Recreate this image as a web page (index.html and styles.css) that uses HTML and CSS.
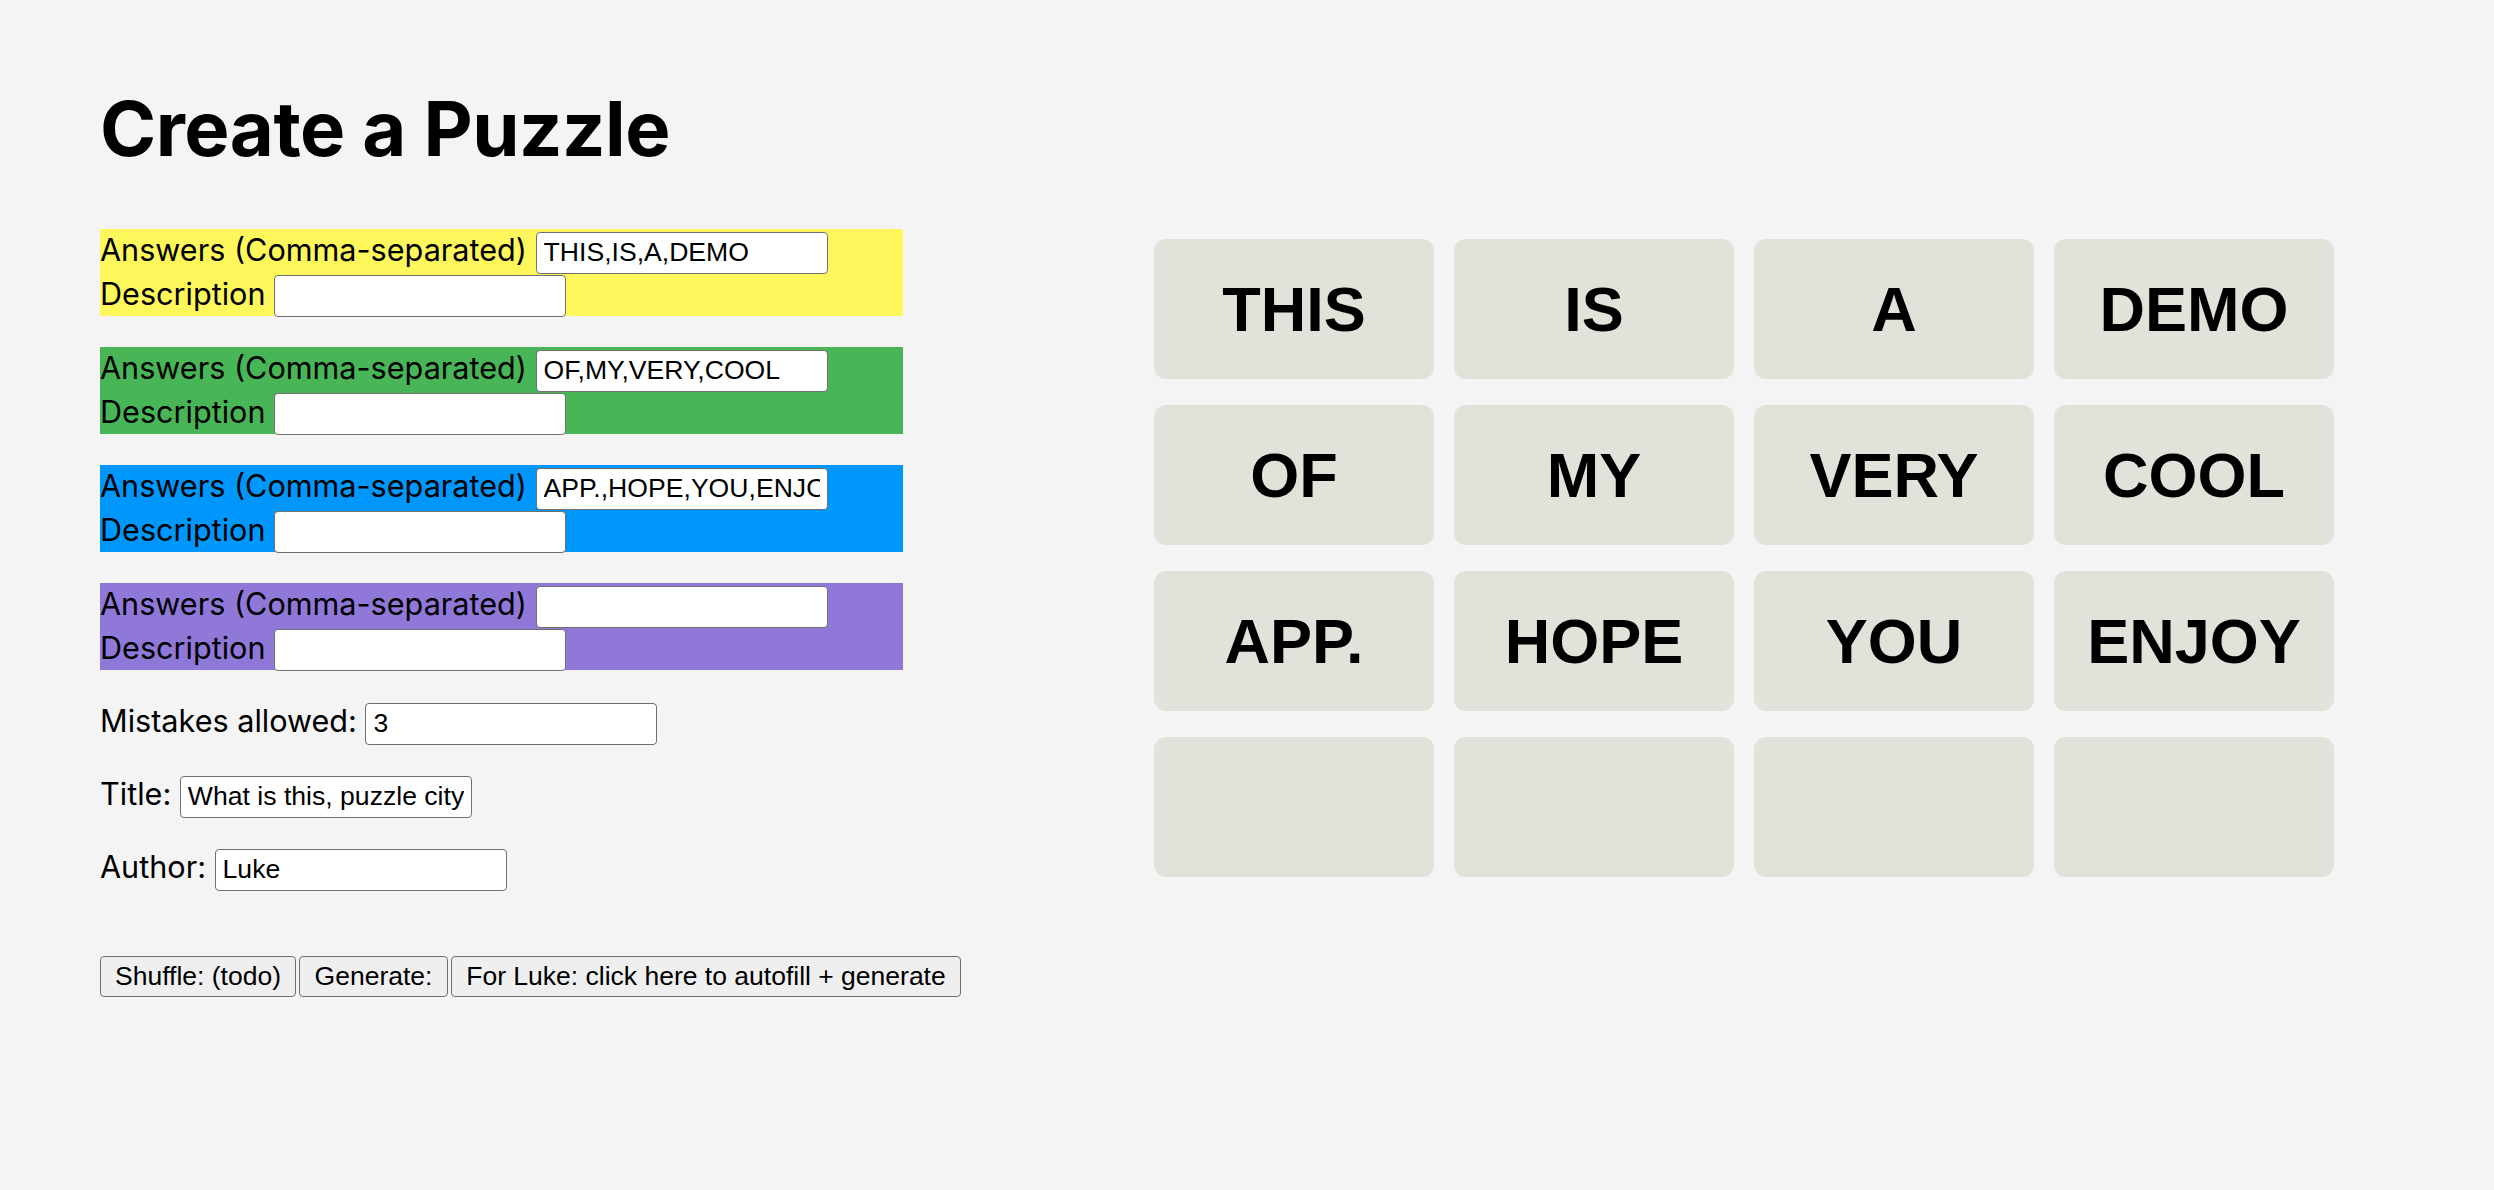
FILE: index.html
```html
<!DOCTYPE html>
<html>
<head>
<meta charset="utf-8">
<title>Create a Puzzle</title>
<link rel="stylesheet" href="styles.css">
</head>
<body>
<div class="page">
  <div class="left">
    <h1 class="title">Create a Puzzle</h1>
    <div class="group yellow">
      <div class="row">Answers (Comma-separated) <input class="field" type="text" value="THIS,IS,A,DEMO"></div>
      <div class="row">Description <input class="field" type="text" value=""></div>
    </div>
    <div class="group green">
      <div class="row">Answers (Comma-separated) <input class="field" type="text" value="OF,MY,VERY,COOL"></div>
      <div class="row">Description <input class="field" type="text" value=""></div>
    </div>
    <div class="group blue">
      <div class="row">Answers (Comma-separated) <input class="field" type="text" value="APP.,HOPE,YOU,ENJOY"></div>
      <div class="row">Description <input class="field" type="text" value=""></div>
    </div>
    <div class="group purple">
      <div class="row">Answers (Comma-separated) <input class="field" type="text" value=""></div>
      <div class="row">Description <input class="field" type="text" value=""></div>
    </div>
    <div class="line">Mistakes allowed: <input class="field" type="text" value="3"></div>
    <div class="line">Title: <input class="field" type="text" value="What is this, puzzle city"></div>
    <div class="line">Author: <input class="field" type="text" value="Luke"></div>
    <div class="buttons">
      <button class="btn btn-shuffle">Shuffle: (todo)</button>
      <button class="btn btn-generate">Generate:</button>
      <button class="btn btn-luke">For Luke: click here to autofill + generate</button>
    </div>
  </div>
  <div class="board">
    <div class="tile">THIS</div>
    <div class="tile">IS</div>
    <div class="tile">A</div>
    <div class="tile">DEMO</div>
    <div class="tile">OF</div>
    <div class="tile">MY</div>
    <div class="tile">VERY</div>
    <div class="tile">COOL</div>
    <div class="tile">APP.</div>
    <div class="tile">HOPE</div>
    <div class="tile">YOU</div>
    <div class="tile">ENJOY</div>
    <div class="tile"></div>
    <div class="tile"></div>
    <div class="tile"></div>
    <div class="tile"></div>
  </div>
</div>
</body>
</html>
```
FILE: styles.css
```css
html, body {
  margin: 0;
  padding: 0;
  background: #f4f4f4;
}

body {
  font-family: Inter, "Noto Sans", sans-serif;
  font-size: 30.6px;
  color: #000;
}

.page {
  display: flex;
  align-items: flex-start;
  padding-left: 100px;
}

.left {
  width: 803px;
  flex: none;
}

.title {
  font-family: Inter, sans-serif;
  font-weight: 700;
  font-size: 76px;
  line-height: 92px;
  margin: 82px 0 55px 0;
  letter-spacing: -0.5px;
}

.group {
  width: 803px;
  margin-bottom: 31px;
}

.yellow { background: #fef75c; }
.green { background: #48b556; }
.blue { background: #0097fd; }
.purple { background: #8f78d8; }

.row {
  height: 43.5px;
  line-height: 41px;
  white-space: nowrap;
}

.line {
  height: 42px;
  line-height: 40px;
  margin-bottom: 31px;
  white-space: nowrap;
}

.field {
  box-sizing: border-box;
  width: 292px;
  height: 42px;
  border: 1.5px solid #707070;
  border-radius: 4px;
  background: #fff;
  padding: 0 7px;
  font-family: "Liberation Sans", Arial, sans-serif;
  font-size: 26.6px;
  color: #000;
  vertical-align: baseline;
  outline: none;
}

.buttons {
  display: flex;
  gap: 3px;
  margin-top: 67px;
}

.btn {
  flex: none;
  box-sizing: border-box;
  height: 41px;
  padding: 0;
  background: #efefef;
  border: 1.5px solid #707070;
  border-radius: 4px;
  font-family: "Liberation Sans", Arial, sans-serif;
  font-size: 26.5px;
  color: #000;
  text-align: center;
  white-space: nowrap;
}

.btn-shuffle { width: 196px; }
.btn-generate { width: 149px; }
.btn-luke { width: 510px; }

.board {
  margin-left: 251px;
  margin-top: 239px;
  display: grid;
  grid-template-columns: repeat(4, 280px);
  grid-auto-rows: 140px;
  column-gap: 20px;
  row-gap: 26px;
}

.tile {
  background: #e2e2da;
  border-radius: 12px;
  display: flex;
  align-items: center;
  justify-content: center;
  font-family: "Liberation Sans", Arial, sans-serif;
  font-weight: 700;
  font-size: 63px;
  color: #000;
}
```
